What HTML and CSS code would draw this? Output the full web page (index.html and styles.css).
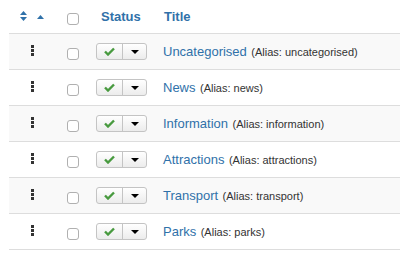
FILE: index.html
```html
<!DOCTYPE html>
<html>
<head>
<meta charset="utf-8">
<link rel="stylesheet" href="styles.css">
</head>
<body>
<div class="table">
  <div class="row head">
    <div class="c1">
      <svg class="sort2" width="7" height="10" viewBox="0 0 7 10"><polygon points="3.5,0 7,4 0,4" fill="#3071a9"/><polygon points="0,6 7,6 3.5,10" fill="#3071a9"/></svg>
      <svg class="sort1" width="7" height="4" viewBox="0 0 7 4"><polygon points="3.5,0 7,4 0,4" fill="#3071a9"/></svg>
    </div>
    <div class="c2"><input type="checkbox" class="cb"></div>
    <div class="c3 hstatus">Status</div>
    <div class="c4 htitle">Title</div>
  </div>

  <div class="row odd">
    <div class="c1"><span class="handle"><i></i><i></i><i></i></span></div>
    <div class="c2"><input type="checkbox" class="cb"></div>
    <div class="c3"><div class="btns"><span class="b1"><svg width="11" height="9" viewBox="0 0 11 9"><polyline points="1,4.5 4,7.5 10,1.5" fill="none" stroke="#489a3f" stroke-width="2.4"/></svg></span><span class="b2"><span class="caret"></span></span></div></div>
    <div class="c4"><a class="link">Uncategorised</a> <span class="alias">(Alias: uncategorised)</span></div>
  </div>

  <div class="row">
    <div class="c1"><span class="handle"><i></i><i></i><i></i></span></div>
    <div class="c2"><input type="checkbox" class="cb"></div>
    <div class="c3"><div class="btns"><span class="b1"><svg width="11" height="9" viewBox="0 0 11 9"><polyline points="1,4.5 4,7.5 10,1.5" fill="none" stroke="#489a3f" stroke-width="2.4"/></svg></span><span class="b2"><span class="caret"></span></span></div></div>
    <div class="c4"><a class="link">News</a> <span class="alias">(Alias: news)</span></div>
  </div>

  <div class="row odd">
    <div class="c1"><span class="handle"><i></i><i></i><i></i></span></div>
    <div class="c2"><input type="checkbox" class="cb"></div>
    <div class="c3"><div class="btns"><span class="b1"><svg width="11" height="9" viewBox="0 0 11 9"><polyline points="1,4.5 4,7.5 10,1.5" fill="none" stroke="#489a3f" stroke-width="2.4"/></svg></span><span class="b2"><span class="caret"></span></span></div></div>
    <div class="c4"><a class="link">Information</a> <span class="alias">(Alias: information)</span></div>
  </div>

  <div class="row">
    <div class="c1"><span class="handle"><i></i><i></i><i></i></span></div>
    <div class="c2"><input type="checkbox" class="cb"></div>
    <div class="c3"><div class="btns"><span class="b1"><svg width="11" height="9" viewBox="0 0 11 9"><polyline points="1,4.5 4,7.5 10,1.5" fill="none" stroke="#489a3f" stroke-width="2.4"/></svg></span><span class="b2"><span class="caret"></span></span></div></div>
    <div class="c4"><a class="link">Attractions</a> <span class="alias">(Alias: attractions)</span></div>
  </div>

  <div class="row odd">
    <div class="c1"><span class="handle"><i></i><i></i><i></i></span></div>
    <div class="c2"><input type="checkbox" class="cb"></div>
    <div class="c3"><div class="btns"><span class="b1"><svg width="11" height="9" viewBox="0 0 11 9"><polyline points="1,4.5 4,7.5 10,1.5" fill="none" stroke="#489a3f" stroke-width="2.4"/></svg></span><span class="b2"><span class="caret"></span></span></div></div>
    <div class="c4"><a class="link">Transport</a> <span class="alias">(Alias: transport)</span></div>
  </div>

  <div class="row">
    <div class="c1"><span class="handle"><i></i><i></i><i></i></span></div>
    <div class="c2"><input type="checkbox" class="cb"></div>
    <div class="c3"><div class="btns"><span class="b1"><svg width="11" height="9" viewBox="0 0 11 9"><polyline points="1,4.5 4,7.5 10,1.5" fill="none" stroke="#489a3f" stroke-width="2.4"/></svg></span><span class="b2"><span class="caret"></span></span></div></div>
    <div class="c4"><a class="link">Parks</a> <span class="alias">(Alias: parks)</span></div>
  </div>
</div>
</body>
</html>
```

FILE: styles.css
```css
html, body {
  margin: 0;
  padding: 0;
  background: #fff;
}
body {
  font-family: "Liberation Sans", Arial, Helvetica, sans-serif;
  color: #333;
}
.table {
  margin-left: 9px;
  width: 391px;
}
.row {
  display: flex;
  align-items: center;
  height: 35px;
  border-bottom: 1px solid #dddddd;
}
.row.head {
  height: 33px;
}
.row.odd {
  background: #f9f9f9;
}
.c1 {
  width: 46px;
  display: flex;
  justify-content: center;
  align-items: center;
}
.c2 {
  width: 36px;
  display: flex;
  justify-content: center;
}
.c3 {
  width: 66px;
  padding-left: 5px;
  box-sizing: border-box;
}
.c4 {
  flex: 1;
  padding-left: 6px;
  padding-bottom: 2px;
  white-space: nowrap;
}
.head .c1 {
  justify-content: flex-start;
  padding-left: 11px;
  box-sizing: border-box;
}
.sort2 {
  display: block;
  margin-top: -2px;
}
.sort1 {
  display: block;
  margin-left: 10px;
}
.head .cb {
  margin-top: 5px;
}
.hstatus {
  padding-left: 10px;
  font-weight: bold;
  font-size: 13px;
  color: #3071a9;
}
.htitle {
  padding-left: 7px;
  padding-bottom: 0;
  font-weight: bold;
  font-size: 13px;
  color: #3071a9;
}
.cb {
  appearance: none;
  -webkit-appearance: none;
  width: 12px;
  height: 12px;
  margin: 5px 0 0 0;
  border: 1px solid #b0b0b0;
  border-radius: 3px;
  background: #fff;
  box-sizing: border-box;
}
.handle {
  display: flex;
  flex-direction: column;
  gap: 1px;
  margin-top: -3px;
}
.handle i {
  display: block;
  width: 3px;
  height: 3px;
  background: #333;
}
.btns {
  display: flex;
  width: 51px;
  height: 17px;
  border: 1px solid #c4c4c4;
  border-radius: 3px;
  box-sizing: border-box;
  background: linear-gradient(#ffffff, #ececec);
}
.b1 {
  width: 25px;
  display: flex;
  justify-content: center;
  align-items: center;
  border-right: 1px solid #c4c4c4;
}
.b1 svg {
  display: block;
}
.b2 {
  flex: 1;
  display: flex;
  justify-content: center;
  align-items: center;
}
.caret {
  width: 0;
  height: 0;
  border-left: 4px solid transparent;
  border-right: 4px solid transparent;
  border-top: 4px solid #000;
}
.link {
  font-size: 13px;
  color: #3071a9;
  text-decoration: none;
}
.alias {
  font-size: 11px;
  color: #333;
}
```
